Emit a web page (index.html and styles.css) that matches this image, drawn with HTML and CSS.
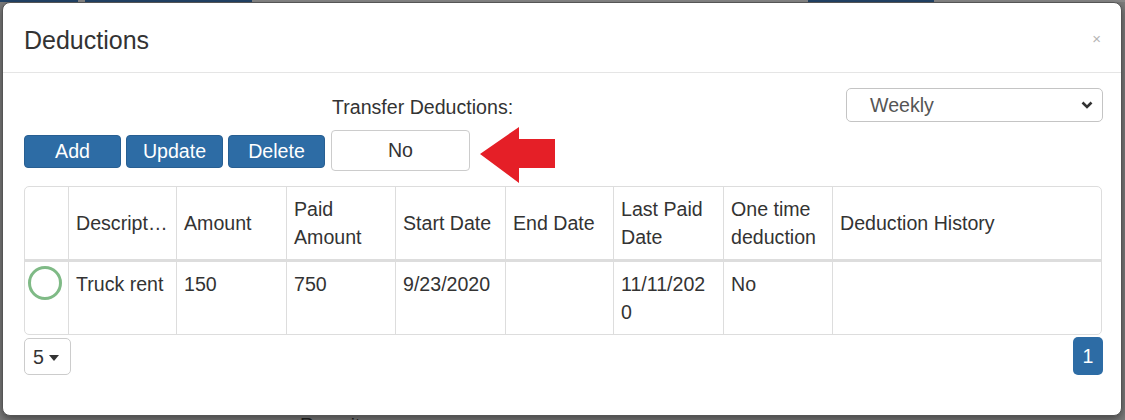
FILE: index.html
```html
<!DOCTYPE html>
<html>
<head>
<meta charset="utf-8">
<title>Deductions</title>
<link rel="stylesheet" href="styles.css">
</head>
<body>
<div class="backdrop-top">
  <span class="bar blue w78"></span><span class="bar gray w7"></span><span class="bar blue w167"></span><span class="bar gray w556"></span><span class="bar blue w126"></span><span class="bar gray grow"></span>
</div>
<div class="modal">
  <div class="modal-header">
    <h4 class="modal-title">Deductions</h4>
    <span class="close">×</span>
  </div>
  <div class="modal-body">
    <div class="toolbar">
      <div class="actions">
        <div class="btn-group">
          <button class="btn">Add</button>
          <button class="btn">Update</button>
          <button class="btn">Delete</button>
        </div>
        <div class="transfer">
          <div class="transfer-label">Transfer Deductions:</div>
          <div class="transfer-row">
            <div class="transfer-box">No</div>
            <svg class="arrow" width="75" height="56" viewBox="0 0 75 56"><polygon points="0,27 39,0 39,12 75,12 75,41 39,41 39,56" fill="#e51f27"/></svg>
          </div>
        </div>
      </div>
      <div class="select">
        <span>Weekly</span>
        <svg width="12" height="8" viewBox="0 0 12 8"><polyline points="1.5,1.5 6,6 10.5,1.5" fill="none" stroke="#333" stroke-width="2.6"/></svg>
      </div>
    </div>
    <table class="grid">
      <colgroup>
        <col style="width:43px"><col style="width:108px"><col style="width:110px"><col style="width:109px"><col style="width:110px"><col style="width:108px"><col style="width:110px"><col style="width:109px"><col>
      </colgroup>
      <thead>
        <tr>
          <th class="first"></th>
          <th class="ellipsis">Description</th>
          <th>Amount</th>
          <th>Paid Amount</th>
          <th>Start Date</th>
          <th>End Date</th>
          <th>Last Paid Date</th>
          <th>One time deduction</th>
          <th>Deduction History</th>
        </tr>
      </thead>
      <tbody>
        <tr>
          <td class="first"><span class="radio"></span></td>
          <td>Truck rent</td>
          <td>150</td>
          <td>750</td>
          <td>9/23/2020</td>
          <td></td>
          <td>11/11/2020</td>
          <td>No</td>
          <td></td>
        </tr>
      </tbody>
    </table>
    <div class="footer-row">
      <div class="page-size"><span>5</span><span class="caret"></span></div>
      <div class="page-btn">1</div>
    </div>
  </div>
</div>
<div class="backdrop-bottom"><span>Recruiter:</span></div>
</body>
</html>
```
FILE: styles.css
```css
* { box-sizing: border-box; }
html, body { margin: 0; padding: 0; }
body {
  width: 1125px;
  height: 420px;
  overflow: hidden;
  background: #7c7c7c;
  font-family: "Liberation Sans", Arial, sans-serif;
  font-size: 19.6px;
  line-height: 28px;
  color: #333;
}
.backdrop-top { display: flex; height: 2px; }
.bar { display: block; height: 2px; }
.bar.blue { background: #23456a; }
.bar.gray { background: #8a8a8a; }
.w78 { width: 78px; } .w7 { width: 7px; } .w167 { width: 167px; } .w556 { width: 556px; } .w126 { width: 126px; }
.grow { flex: 1; }

.modal {
  margin-left: 2px;
  width: 1120px;
  height: 414px;
  background: #fff;
  border: 1px solid #555;
  border-radius: 8px;
  box-shadow: 0 3px 8px rgba(0,0,0,.45);
  position: relative;
  z-index: 1;
}
.modal-header {
  height: 70px;
  padding: 5px 20px 0 21px;
  border-bottom: 1px solid #e5e5e5;
  display: flex;
  align-items: center;
  justify-content: space-between;
}
.modal-title { margin: 0; font-size: 25px; font-weight: normal; line-height: 36px; color: #333; }
.close { font-size: 15px; color: #b5b5b5; line-height: 1; margin-top: -4px; }

.modal-body { padding: 15px 18px 0 21px; }
.toolbar { display: flex; justify-content: space-between; align-items: flex-start; }
.actions { display: flex; align-items: flex-end; }
.btn-group { display: flex; gap: 5px; margin-bottom: 3px; }
.btn {
  width: 97px;
  height: 33px;
  padding: 0;
  border: 1px solid #285f92;
  border-radius: 4px;
  background: #2d6ca5;
  color: #fff;
  font-family: inherit;
  font-size: 19.6px;
  line-height: 31px;
}
.transfer { margin-left: 6px; display: flex; flex-direction: column; }
.transfer-label { margin-top: 5px; margin-bottom: 9px; padding-left: 1px; }
.transfer-row { display: flex; align-items: flex-start; }
.transfer-box {
  width: 139px;
  height: 41px;
  border: 1px solid #ccc;
  border-radius: 4px;
  text-align: center;
  line-height: 39px;
  color: #333;
}
.arrow { display: block; margin: -3px 0 -12px 10px; }

.select {
  width: 257px;
  height: 34px;
  border: 1px solid #c4c4c4;
  border-radius: 5px;
  display: flex;
  align-items: center;
  justify-content: space-between;
  padding: 0 9px 0 23px;
  color: #555;
}
.select svg { display: block; }

.grid {
  margin-top: 15px;
  width: 1078px;
  table-layout: fixed;
  border-collapse: separate;
  border-spacing: 0;
  border: 1px solid #ddd;
  border-radius: 5px;
}
.grid th, .grid td {
  padding: 8px 9px 8px 7px;
  text-align: left;
  font-weight: normal;
  border-left: 1px solid #ddd;
  overflow-wrap: anywhere;
}
.grid th.first, .grid td.first { border-left: none; }
.grid th { vertical-align: middle; border-bottom: 3px solid #ddd; height: 70px; }
.grid td { vertical-align: top; height: 69px; }
.grid th.ellipsis { white-space: nowrap; overflow: hidden; text-overflow: ellipsis; padding-right: 7px; }
.grid td.first { padding: 4px 0 0 3px; }
.radio {
  display: block;
  width: 34px;
  height: 34px;
  border: 3px solid #7fba86;
  border-radius: 50%;
}

.footer-row { display: flex; justify-content: space-between; align-items: flex-start; margin-top: 2px; }
.page-size {
  margin-top: 1px;
  width: 47px;
  height: 37px;
  border: 1px solid #ccc;
  border-radius: 5px;
  display: flex;
  align-items: center;
  padding-left: 8px;
  gap: 5px;
  color: #333;
}
.caret {
  width: 0; height: 0;
  border-top: 6px solid #333;
  border-left: 5px solid transparent;
  border-right: 5px solid transparent;
  margin-top: 2px;
}
.page-btn {
  width: 30px;
  height: 38px;
  background: #2d6ca5;
  border-radius: 5px;
  color: #fff;
  text-align: center;
  line-height: 38px;
}

.backdrop-bottom {
  height: 4px;
  overflow: hidden;
  padding-left: 300px;
  color: #222;
  font-size: 19px;
  line-height: 18px;
}
```
